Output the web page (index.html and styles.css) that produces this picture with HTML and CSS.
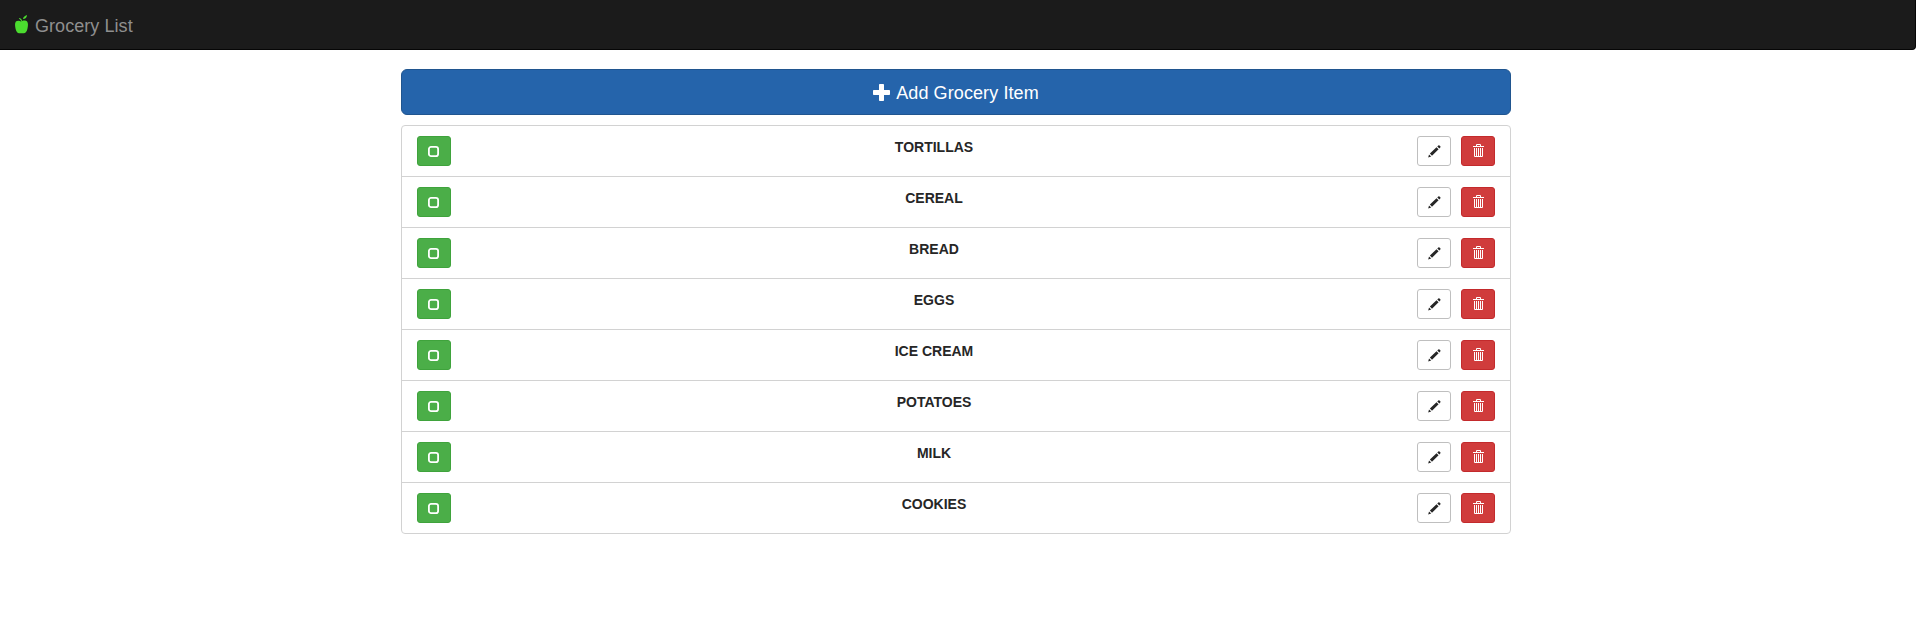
FILE: index.html
```html
<!DOCTYPE html>
<html lang="en">
<head>
<meta charset="utf-8">
<title>Grocery List</title>
<link rel="stylesheet" href="styles.css">
</head>
<body>
<svg class="sprite" aria-hidden="true">
  <symbol id="square" viewBox="0 0 11 11"><rect x=".9" y=".9" width="9.2" height="9.2" rx="2.2" fill="none" stroke="currentColor" stroke-width="1.8"/></symbol>
  <symbol id="pencil" viewBox="0 0 13 13"><path fill="currentColor" d="M.2 12.4 1 9.5 3.2 11.6ZM1.9 8.6 8.5 2.2 10.6 4.3 4 10.7ZM9.3 1.5 10.3.5Q10.9 0 11.5.5L12.3 1.3Q12.8 1.9 12.3 2.5L11.3 3.5Z"/></symbol>
  <symbol id="trash" viewBox="0 0 12 14"><path fill="currentColor" d="M3 2V1Q3 0 4 0H7Q8 0 8 1V2H11V3H0V2ZM4 2H7V1H4ZM1 4H2V12H3V4H4V12H5V4H6V12H7V4H8V12H9V4H10V12Q10 13 9 13H2Q1 13 1 12Z"/></symbol>
</svg>
<nav class="navbar">
  <a class="brand">
    <svg class="apple" viewBox="0 0 13 19"><path fill="#4bdc2f" d="M6.4 6.8C6.1 5.5 5.2 4.3 3.8 3.5L4.6 3C6 3.5 6.8 4.5 7.1 5.9 8.8 5.2 11 5.3 12.1 6.6 13.4 8.2 13 11 12.5 13.4 12 16.2 10.4 18.3 8.8 18.3H4.2C2.6 18.3 1 16.2.5 13.4 0 11-.4 8.2.9 6.6 2.1 5.3 4.8 5.3 6.4 6.8ZM8 4.1C8 2.2 9.6.8 12 0 12 2.3 10.4 4.1 8 4.1Z"/></svg>
    <span>Grocery List</span>
  </a>
</nav>
<main class="container">
  <button class="add">
    <svg class="plus" viewBox="0 0 17 17"><path fill="currentColor" d="M6.8 0H10.2Q11 0 11 .8V6H16.2Q17 6 17 6.8V10.2Q17 11 16.2 11H11V16.2Q11 17 10.2 17H6.8Q6 17 6 16.2V11H.8Q0 11 0 10.2V6.8Q0 6 .8 6H6V.8Q6 0 6.8 0Z"/></svg>
    <span>Add Grocery Item</span>
  </button>
  <ul class="list">
    <li class="item"><button class="btn check"><svg class="i-square"><use href="#square"/></svg></button><strong class="name">TORTILLAS</strong><button class="btn edit"><svg class="i-pencil"><use href="#pencil"/></svg></button><button class="btn remove"><svg class="i-trash"><use href="#trash"/></svg></button></li>
    <li class="item"><button class="btn check"><svg class="i-square"><use href="#square"/></svg></button><strong class="name">CEREAL</strong><button class="btn edit"><svg class="i-pencil"><use href="#pencil"/></svg></button><button class="btn remove"><svg class="i-trash"><use href="#trash"/></svg></button></li>
    <li class="item"><button class="btn check"><svg class="i-square"><use href="#square"/></svg></button><strong class="name">BREAD</strong><button class="btn edit"><svg class="i-pencil"><use href="#pencil"/></svg></button><button class="btn remove"><svg class="i-trash"><use href="#trash"/></svg></button></li>
    <li class="item"><button class="btn check"><svg class="i-square"><use href="#square"/></svg></button><strong class="name">EGGS</strong><button class="btn edit"><svg class="i-pencil"><use href="#pencil"/></svg></button><button class="btn remove"><svg class="i-trash"><use href="#trash"/></svg></button></li>
    <li class="item"><button class="btn check"><svg class="i-square"><use href="#square"/></svg></button><strong class="name">ICE CREAM</strong><button class="btn edit"><svg class="i-pencil"><use href="#pencil"/></svg></button><button class="btn remove"><svg class="i-trash"><use href="#trash"/></svg></button></li>
    <li class="item"><button class="btn check"><svg class="i-square"><use href="#square"/></svg></button><strong class="name">POTATOES</strong><button class="btn edit"><svg class="i-pencil"><use href="#pencil"/></svg></button><button class="btn remove"><svg class="i-trash"><use href="#trash"/></svg></button></li>
    <li class="item"><button class="btn check"><svg class="i-square"><use href="#square"/></svg></button><strong class="name">MILK</strong><button class="btn edit"><svg class="i-pencil"><use href="#pencil"/></svg></button><button class="btn remove"><svg class="i-trash"><use href="#trash"/></svg></button></li>
    <li class="item"><button class="btn check"><svg class="i-square"><use href="#square"/></svg></button><strong class="name">COOKIES</strong><button class="btn edit"><svg class="i-pencil"><use href="#pencil"/></svg></button><button class="btn remove"><svg class="i-trash"><use href="#trash"/></svg></button></li>
  </ul>
</main>
</body>
</html>
```

FILE: styles.css
```css
* { box-sizing: border-box; }
body {
  margin: 0;
  background: #fff;
  color: #262626;
  font: 14px/20px "Liberation Sans", Arial, sans-serif;
}
svg { display: block; flex: none; }
.sprite { display: none; }
.navbar {
  height: 50px;
  padding: 15px 15px 0;
  background: #1b1b1b;
  border: solid #060606;
  border-width: 0 1px 1px 0;
  border-radius: 0 0 4px 0;
}
.brand {
  display: flex;
  gap: 7px;
  width: max-content;
  color: #8f8f8f;
  font-size: 18px;
  letter-spacing: 0.06px;
}
.brand span { padding-top: 1px; }
.apple { width: 13px; height: 19px; }
.container {
  width: 1110px;
  margin: 19px 0 0 401px;
}
.add {
  display: flex;
  justify-content: center;
  align-items: center;
  gap: 6px;
  width: 100%;
  height: 46px;
  margin: 0 0 10px;
  padding: 0;
  border: 1px solid #20558f;
  border-radius: 6px;
  background: #2564ab;
  color: #fff;
  font: 18px/24px "Liberation Sans", Arial, sans-serif;
  letter-spacing: 0.1px;
}
.add span { padding-top: 2px; }
.plus { width: 17px; height: 17px; }
.list {
  margin: 0;
  padding: 0;
  list-style: none;
  border: 1px solid #d2d2d2;
  border-radius: 4px;
}
.item {
  display: flex;
  height: 51px;
  padding: 10px 15px;
  border-bottom: 1px solid #d2d2d2;
}
.item:last-child { height: 50px; border-bottom: 0; }
.name { flex: 1; padding-top: 1px; text-align: center; }
.btn {
  display: flex;
  justify-content: center;
  align-items: flex-start;
  width: 34px;
  height: 30px;
  padding: 0;
  border: 1px solid;
  border-radius: 3px;
}
.check { background: #4bae48; border-color: #3fa33c; color: #fff; }
.edit { background: #fff; border-color: #bfbfbf; color: #262626; }
.remove { margin-left: 10px; background: #d03c3c; border-color: #c32a2c; color: #fff; }
.i-square { width: 11px; height: 11px; margin: 9px 1px 0 0; }
.i-pencil { width: 13px; height: 13px; margin: 8px 0 0; }
.i-trash { width: 12px; height: 14px; margin: 7px 0 0 2px; }
```
